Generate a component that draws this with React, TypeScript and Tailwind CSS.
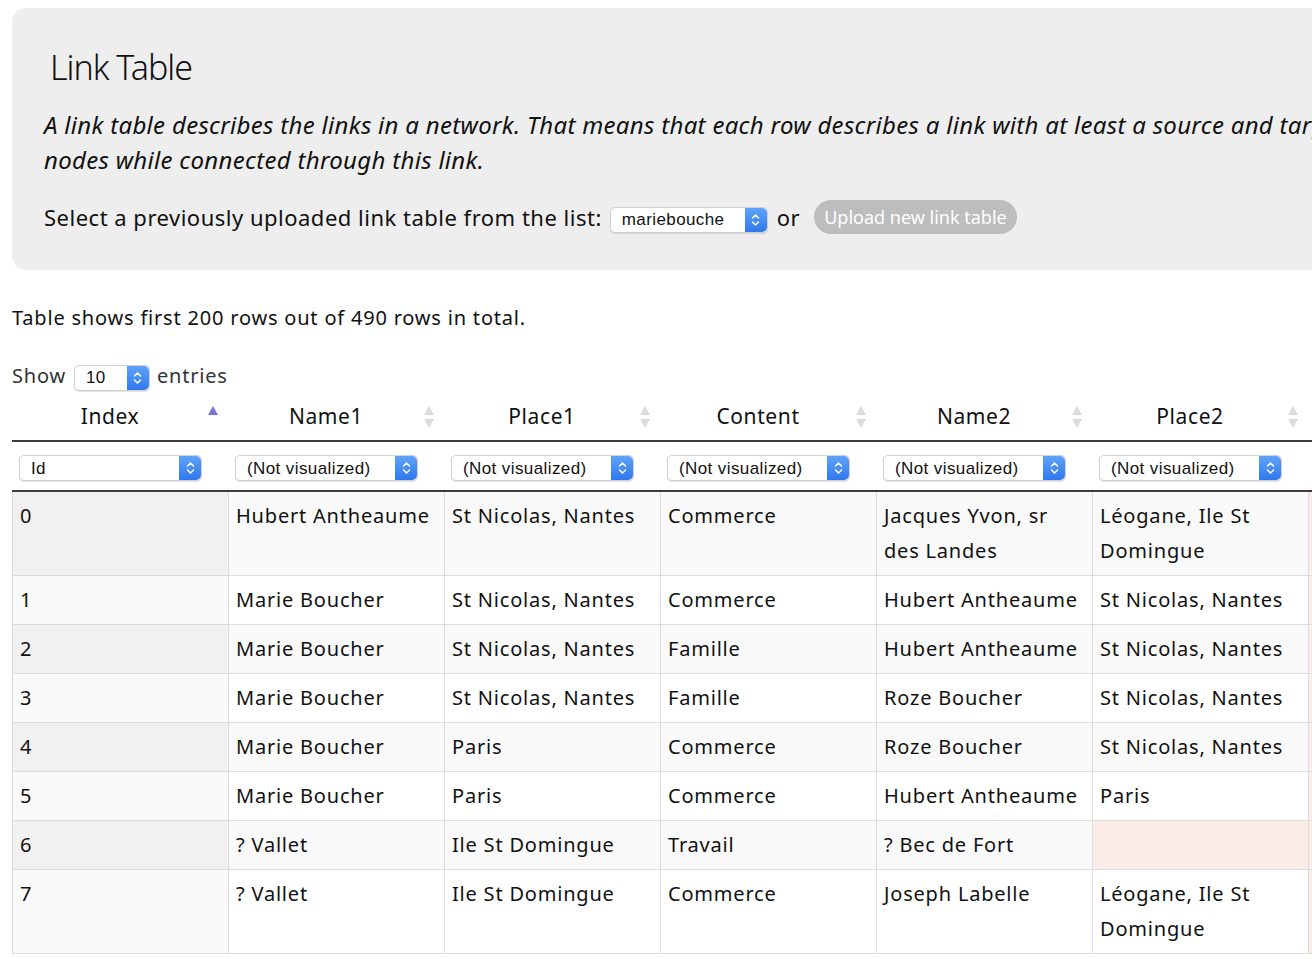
import React from "react";

const columns = ["Index", "Name1", "Place1", "Content", "Name2", "Place2", "Content2"];

type Row = { cells: string[]; empty?: number[] };

const rows: Row[] = [
  { cells: ["0", "Hubert Antheaume", "St Nicolas, Nantes", "Commerce", "Jacques Yvon, sr des Landes", "Léogane, Ile St Domingue", ""] },
  { cells: ["1", "Marie Boucher", "St Nicolas, Nantes", "Commerce", "Hubert Antheaume", "St Nicolas, Nantes", ""] },
  { cells: ["2", "Marie Boucher", "St Nicolas, Nantes", "Famille", "Hubert Antheaume", "St Nicolas, Nantes", ""] },
  { cells: ["3", "Marie Boucher", "St Nicolas, Nantes", "Famille", "Roze Boucher", "St Nicolas, Nantes", ""] },
  { cells: ["4", "Marie Boucher", "Paris", "Commerce", "Roze Boucher", "St Nicolas, Nantes", ""] },
  { cells: ["5", "Marie Boucher", "Paris", "Commerce", "Hubert Antheaume", "Paris", ""] },
  { cells: ["6", "? Vallet", "Ile St Domingue", "Travail", "? Bec de Fort", "", ""], empty: [5] },
  { cells: ["7", "? Vallet", "Ile St Domingue", "Commerce", "Joseph Labelle", "Léogane, Ile St Domingue", ""] },
];

function Stepper() {
  return (
    <span className="flex w-[22px] shrink-0 items-center justify-center self-stretch rounded-r-[5px] bg-gradient-to-b from-[#5ea2f8] to-[#2f78ee]">
      <svg width="9" height="14" viewBox="0 0 9 14" fill="none">
        <path d="M1.5 5 L4.5 2 L7.5 5" stroke="white" strokeWidth="1.5" strokeLinecap="round" strokeLinejoin="round" />
        <path d="M1.5 9 L4.5 12 L7.5 9" stroke="white" strokeWidth="1.5" strokeLinecap="round" strokeLinejoin="round" />
      </svg>
    </span>
  );
}

function MacSelect({ value, width }: { value: string; width: string }) {
  return (
    <span
      className={`inline-flex h-[26px] ${width} items-stretch rounded-[5px] border border-[#d0d0d0] bg-white align-middle tracking-[0.4px] shadow-[0_1px_1px_rgba(0,0,0,0.12)]`}
    >
      <span className="flex flex-1 items-center overflow-hidden whitespace-nowrap pl-[11px] text-[17px] leading-none text-[#111] [font-family:'Liberation_Sans',Arial,sans-serif]">
        {value}
      </span>
      <Stepper />
    </span>
  );
}

function SortIcon({ active }: { active?: boolean }) {
  if (active) {
    return (
      <svg width="14" height="12" viewBox="0 0 14 12" className="absolute right-[8px] top-[12px]">
        <path d="M7 1 L12 10 L2 10 Z" fill="#7474d8" />
      </svg>
    );
  }
  return (
    <svg width="14" height="24" viewBox="0 0 14 24" className="absolute right-[8px] top-[12px]">
      <path d="M7 1 L12 10 L2 10 Z" fill="#dcdcdc" />
      <path d="M7 23 L12 14 L2 14 Z" fill="#dcdcdc" />
    </svg>
  );
}

export default function App() {
  return (
    <div className="min-h-screen w-full overflow-hidden bg-white text-[#111] [font-family:'Noto_Sans',Lato,sans-serif]">
      <div className="w-[1600px] px-[12px] pt-[8px]">
        {/* Header panel */}
        <div className="rounded-[14px] bg-[#eeeeee] pb-[36px] pl-[32px] pr-[32px] pt-[40px]">
          <h1 className="ml-[6px] text-[34px] leading-[38px] tracking-[-1px] text-[#111] [font-weight:300]">
            Link Table
          </h1>
          <p className="mt-[21px] w-[1500px] text-[24px] italic leading-[35px] tracking-[0.3px]">
            A link table describes the links in a network. That means that each row describes a link with at least a source and target
            <br />
            nodes while connected through this link.
          </p>
          <div className="mt-[23px] flex items-center text-[22px] leading-[30px] tracking-[0.5px]">
            <span>Select a previously uploaded link table from the list:</span>
            <span className="ml-[8px]">
              <MacSelect value="mariebouche" width="w-[158px]" />
            </span>
            <span className="ml-[9px]">or</span>
            <button className="ml-[14px] h-[34px] rounded-full bg-[#bdbdbd] px-[10px] text-[18px] leading-none tracking-normal text-white">
              Upload new link table
            </button>
          </div>
        </div>

        <p className="mt-[33px] text-[20px] leading-[30px] tracking-[0.8px]">Table shows first 200 rows out of 490 rows in total.</p>

        <div className="mt-[28px] flex items-center text-[20px] leading-[30px] tracking-[0.8px] text-[#333]">
          <span>Show</span>
          <span className="ml-[8px] mr-[7px]">
            <MacSelect value="10" width="w-[76px]" />
          </span>
          <span>entries</span>
        </div>

        <table className="mt-[2px] w-[1512px] table-fixed border-separate border-spacing-0 text-[20px] leading-[35px] tracking-[0.8px]">
          <colgroup>
            {columns.map((c) => (
              <col key={c} className="w-[216px]" />
            ))}
          </colgroup>
          <thead>
            <tr>
              {columns.map((c, i) => (
                <th
                  key={c}
                  className="relative h-[49px] border-b-2 border-[#3c3c3c] pl-[10px] pr-[30px] text-center text-[21px] font-normal tracking-[0.6px]"
                >
                  {c}
                  <SortIcon active={i === 0} />
                </th>
              ))}
            </tr>
            <tr>
              {columns.map((c, i) => (
                <th key={c} className="h-[50px] border-b-2 border-[#3c3c3c] px-[7px] text-left font-normal">
                  <MacSelect value={i === 0 ? "Id" : "(Not visualized)"} width="w-[183px]" />
                </th>
              ))}
            </tr>
          </thead>
          <tbody>
            {rows.map((r, ri) => {
              const odd = ri % 2 === 0;
              return (
                <tr key={ri}>
                  {r.cells.map((cell, ci) => {
                    let bg = odd ? "bg-[#f9f9f9]" : "bg-white";
                    if (ci === 0) bg = odd ? "bg-[#f1f1f1]" : "bg-[#fafafa]";
                    if (ci === 6 || (r.empty && r.empty.includes(ci))) bg = "bg-[#fbecea]";
                    return (
                      <td
                        key={ci}
                        className={`${bg} border-b border-l border-[#dddddd] pb-[7px] pl-[7px] pr-[6px] pt-[6px] align-top`}
                      >
                        {cell}
                      </td>
                    );
                  })}
                </tr>
              );
            })}
          </tbody>
        </table>
      </div>
    </div>
  );
}
